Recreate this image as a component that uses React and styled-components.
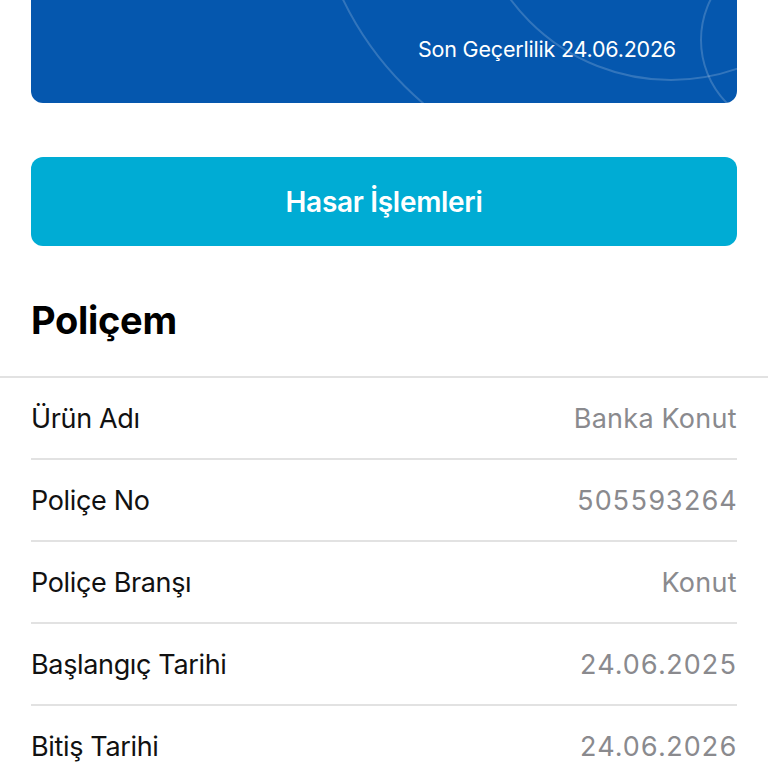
import React from "react";
import styled, { createGlobalStyle } from "styled-components";

const GlobalStyle = createGlobalStyle`
  body {
    margin: 0;
    background: #fff;
    font-family: Inter, "Noto Sans", Roboto, sans-serif;
    -webkit-font-smoothing: antialiased;
  }
`;

const Page = styled.div`
  width: 768px;
  display: flex;
  flex-direction: column;
`;

const Inset = styled.div`
  padding: 0 31px;
  display: flex;
  flex-direction: column;
`;

const Card = styled.div`
  position: relative;
  height: 103px;
  background: #0557ae;
  border-radius: 0 0 12px 12px;
  overflow: hidden;
  display: flex;
  align-items: flex-end;
  justify-content: flex-end;
  padding: 0 61px 41px 0;
  box-sizing: border-box;
`;

const CardArt = styled.svg`
  position: absolute;
  inset: 0;
  width: 100%;
  height: 100%;
`;

const Expiry = styled.span`
  position: relative;
  color: #fff;
  font-size: 21.5px;
  letter-spacing: -0.2px;
  line-height: 26px;
`;

const ActionButton = styled.button`
  margin-top: 54px;
  height: 89px;
  border: none;
  border-radius: 12px;
  background: #00acd4;
  color: #fff;
  font-family: inherit;
  font-size: 28px;
  font-weight: 600;
  letter-spacing: -0.3px;
  cursor: pointer;
`;

const Title = styled.h2`
  margin: 0;
  height: 130px;
  display: flex;
  align-items: center;
  font-size: 38px;
  font-weight: 700;
  letter-spacing: -0.3px;
  color: #000;
  padding-top: 18px;
  box-sizing: border-box;
`;

const Divider = styled.div`
  height: 2px;
  background: #e2e2e2;
`;

const Row = styled.div`
  height: 82px;
  display: flex;
  align-items: center;
  justify-content: space-between;
  border-bottom: 2px solid #e2e2e2;
  box-sizing: border-box;
  font-size: 27px;
`;

const Label = styled.span`
  color: #111;
  letter-spacing: -0.35px;
`;

const Value = styled.span`
  color: #8a8a8e;
  letter-spacing: 0.3px;
  font-feature-settings: "tnum";
`;

const rows = [
  ["Ürün Adı", "Banka Konut"],
  ["Poliçe No", "505593264"],
  ["Poliçe Branşı", "Konut"],
  ["Başlangıç Tarihi", "24.06.2025"],
  ["Bitiş Tarihi", "24.06.2026"],
];

export default function App() {
  return (
    <>
      <GlobalStyle />
      <Page>
        <Inset>
          <Card>
            <CardArt viewBox="0 0 706 103" preserveAspectRatio="none">
              <g fill="none" stroke="#ffffff" strokeOpacity="0.18" strokeWidth="2">
                <circle cx="600" cy="-140" r="320" />
                <circle cx="640" cy="-120" r="200" />
                <circle cx="760" cy="40" r="90" />
              </g>
            </CardArt>
            <Expiry>Son Geçerlilik 24.06.2026</Expiry>
          </Card>
          <ActionButton>Hasar İşlemleri</ActionButton>
          <Title>Poliçem</Title>
        </Inset>
        <Divider />
        <Inset>
          {rows.map(([label, value]) => (
            <Row key={label}>
              <Label>{label}</Label>
              <Value>{value}</Value>
            </Row>
          ))}
        </Inset>
      </Page>
    </>
  );
}
